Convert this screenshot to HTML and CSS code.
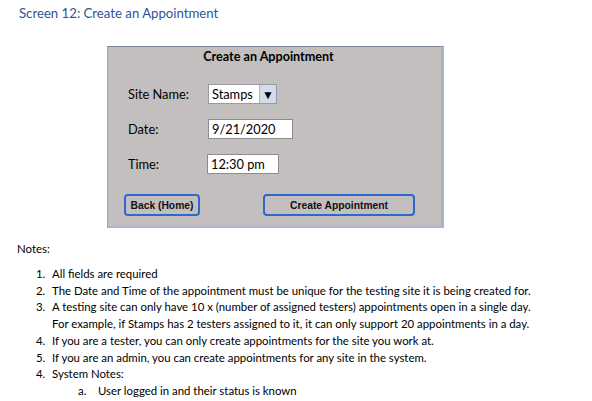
FILE: index.html
```html
<!DOCTYPE html>
<html>
<head>
<meta charset="utf-8">
<link rel="stylesheet" href="styles.css">
</head>
<body>
<h2 class="doc-title">Screen 12: Create an Appointment</h2>
<div class="panel">
  <div class="panel-title">Create an Appointment</div>
  <div class="form">
    <div class="label">Site Name:</div>
    <div class="field select"><span class="select-value">Stamps</span><span class="select-arrow">&#9660;</span></div>
    <div class="label">Date:</div>
    <div class="field date">9/21/2020</div>
    <div class="label">Time:</div>
    <div class="field time">12:30 pm</div>
  </div>
  <div class="actions">
    <div class="btn btn-back">Back (Home)</div>
    <div class="btn btn-create">Create Appointment</div>
  </div>
</div>
<div class="notes">
  <p class="notes-head">Notes:</p>
  <div class="item"><span class="num">1.</span><span class="txt">All fields are required</span></div>
  <div class="item"><span class="num">2.</span><span class="txt">The Date and Time of the appointment must be unique for the testing site it is being created for.</span></div>
  <div class="item"><span class="num">3.</span><span class="txt">A testing site can only have 10 x (number of assigned testers) appointments open in a single day.<br>For example, if Stamps has 2 testers assigned to it, it can only support 20 appointments in a day.</span></div>
  <div class="item"><span class="num">4.</span><span class="txt">If you are a tester, you can only create appointments for the site you work at.</span></div>
  <div class="item"><span class="num">5.</span><span class="txt">If you are an admin, you can create appointments for any site in the system.</span></div>
  <div class="item"><span class="num">4.</span><span class="txt">System Notes:</span></div>
  <div class="item sub"><span class="num">a.</span><span class="txt">User logged in and their status is known</span></div>
</div>
</body>
</html>
```
FILE: styles.css
```css
html, body {
  margin: 0;
  padding: 0;
  background: #ffffff;
}
body {
  font-family: "Lato", "Open Sans", sans-serif;
  color: #000;
}
.doc-title {
  margin: 0;
  padding: 5px 0 0 19px;
  font-weight: 400;
  font-size: 13.2px;
  line-height: 16px;
  color: #2f5496;
}
.panel {
  margin: 25px 0 0 107px;
  width: 333px;
  height: 179px;
  box-sizing: content-box;
  background: #c3bfbe;
  border-top: 1px solid #7d879c;
  border-left: 1px solid #9ea5b4;
  border-right: 3px solid #a9b3c7;
  border-bottom: 2px solid #a8b6cf;
}
.panel-title {
  padding-top: 2px;
  padding-right: 12px;
  text-align: center;
  font-weight: 700;
  font-size: 12.6px;
  line-height: 16px;
}
.form {
  margin-top: 19px;
  display: grid;
  grid-template-columns: 80px auto;
  grid-auto-rows: 20px;
  row-gap: 15px;
  padding-left: 20px;
  font-size: 12.8px;
}
.label {
  display: flex;
  align-items: center;
}
.field {
  box-sizing: border-box;
  height: 20px;
  background: #fff;
  border: 1px solid #8c8c8c;
  padding: 0 3px;
  display: flex;
  align-items: center;
  justify-self: start;
}
.select {
  width: 69px;
  padding: 0;
  border-color: #9a9aa6;
}
.select-value {
  flex: 1;
  padding-left: 3px;
}
.select-arrow {
  width: 16px;
  height: 100%;
  background: #d3dcec;
  border-left: 1px solid #a9b4c8;
  display: flex;
  align-items: center;
  justify-content: center;
  font-size: 12px;
}
.date { width: 85px; }
.time { width: 72px; margin-left: -1px; }
.actions {
  margin-top: 20px;
  display: flex;
  padding-left: 16px;
  gap: 63px;
}
.btn {
  box-sizing: border-box;
  height: 22px;
  border: 2px solid #2d68cf;
  border-radius: 4px;
  background: #c3bfbe;
  font-family: "Liberation Sans", Arial, sans-serif;
  font-weight: 700;
  font-size: 10.3px;
  display: flex;
  align-items: center;
  justify-content: center;
  color: #111;
}
.btn-back { width: 76px; }
.btn-create { width: 152px; }
.notes {
  font-size: 11.4px;
  line-height: 16.7px;
}
.notes-head {
  margin: 13px 0 0 17px;
  line-height: 16px;
}
.item {
  display: flex;
  padding-left: 36px;
}
.notes-head + .item {
  margin-top: 9px;
}
.num {
  width: 16px;
  flex: none;
}
.item.sub {
  padding-left: 78px;
}
.item.sub .num {
  width: 20px;
}
```
